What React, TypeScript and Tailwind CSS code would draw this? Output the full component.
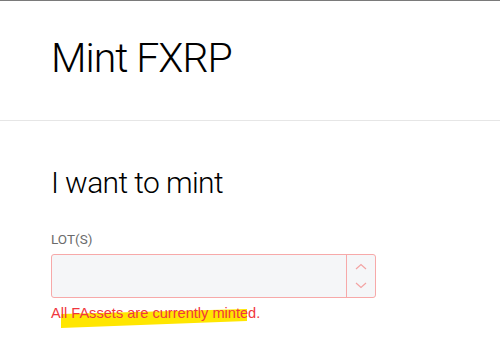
import React from "react";

function Chevron({ up }: { up?: boolean }) {
  return (
    <svg width="12" height="7" viewBox="0 0 12 7" fill="none">
      <path
        d={up ? "M1 6L6 1.5L11 6" : "M1 1L6 5.5L11 1"}
        stroke="#f3a3a3"
        strokeWidth="1.2"
      />
    </svg>
  );
}

export default function App() {
  return (
    <div className="h-[360px] w-[500px] overflow-hidden border-t border-[#7a7a7a] bg-white font-['Roboto',sans-serif] text-black">
      <header className="flex h-[120px] items-center border-b border-[#e6e6e6] pl-[51px]">
        <h1 className="pb-[4px] text-[41px] font-light leading-none tracking-[-0.025em]">Mint FXRP</h1>
      </header>

      <main className="pl-[51px] pt-[47px]">
        <h2 className="text-[30px] font-light leading-none tracking-[-0.02em]">I want to mint</h2>

        <label className="mt-[35px] block text-[13.5px] leading-none text-[#6b6b6b]">LOT(S)</label>

        <div className="mt-[7px] flex h-[44px] w-[325px] rounded-[3px] border border-[#f7a9a9] bg-[#f5f6f8]">
          <input className="min-w-0 flex-1 bg-transparent outline-none" />
          <div className="flex w-[29px] flex-col items-center justify-between border-l border-[#f7a9a9] py-[8px]">
            <Chevron up />
            <Chevron />
          </div>
        </div>

        {/* highlighter mark sits behind the error text */}
        <div className="relative mt-[5px] w-fit">
          <svg className="absolute left-[10px] top-0" width="188" height="26" viewBox="0 0 188 26">
            <polygon points="0,11 186,6 186,18 0,25" fill="#ffe600" />
          </svg>
          <p className="relative font-['Liberation_Sans',sans-serif] text-[14.6px] leading-[20px] text-[#f0363d]">
            All FAssets are currently minted.
          </p>
        </div>
      </main>
    </div>
  );
}
